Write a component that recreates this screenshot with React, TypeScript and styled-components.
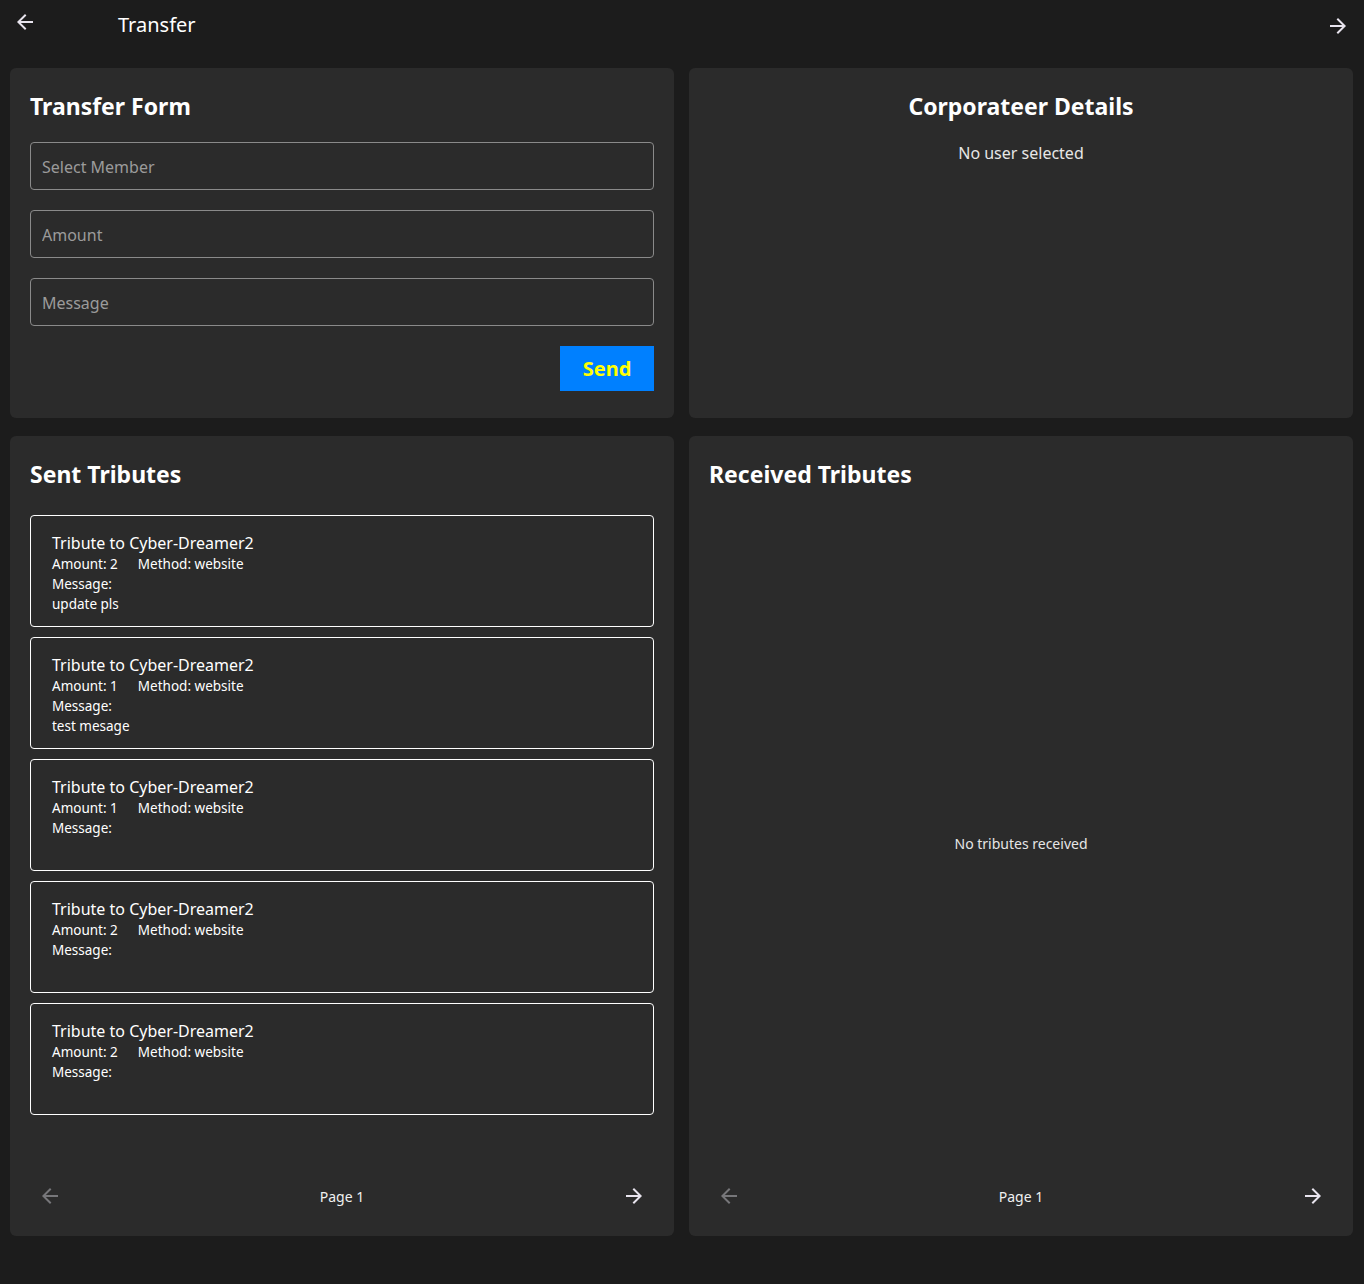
import React from 'react';
import styled, { createGlobalStyle } from 'styled-components';
import { MdArrowBack, MdArrowForward } from 'react-icons/md';

const GlobalStyle = createGlobalStyle`
  html, body {
    margin: 0;
    padding: 0;
    background: #1c1c1c;
    color: #ffffff;
    font-family: 'Noto Sans', 'Open Sans', sans-serif;
  }
  * {
    box-sizing: border-box;
  }
`;

const Page = styled.div`
  min-height: 1284px;
  background: #1c1c1c;
`;

const TopBar = styled.header`
  display: flex;
  align-items: center;
  height: 48px;
  padding: 0 14px 0 13px;
`;

const IconButton = styled.button<{ muted?: boolean }>`
  display: flex;
  align-items: center;
  justify-content: center;
  background: none;
  border: none;
  padding: 0;
  cursor: pointer;
  color: ${({ muted }) => (muted ? '#77777a' : '#e8e4ee')};
`;

const TopTitle = styled.h1`
  margin: 0 0 0 81px;
  font-size: 20px;
  font-weight: 400;
  flex: 1;
`;

const Grid = styled.main`
  display: grid;
  grid-template-columns: 664px 664px;
  grid-template-rows: 350px 800px;
  column-gap: 15px;
  row-gap: 18px;
  padding: 20px 10px 0 10px;
`;

const Panel = styled.section`
  display: flex;
  flex-direction: column;
  background: #2b2b2b;
  border-radius: 6px;
  padding: 22px 20px 20px 20px;
`;

const PanelTitle = styled.h2<{ center?: boolean }>`
  margin: 0 0 20px 0;
  font-size: 23px;
  font-weight: 700;
  line-height: 32px;
  text-align: ${({ center }) => (center ? 'center' : 'left')};
`;

const Form = styled.div`
  display: flex;
  flex-direction: column;
  gap: 20px;
`;

const Input = styled.input`
  height: 48px;
  width: 100%;
  background: transparent;
  border: 1px solid #8a8a8a;
  border-radius: 4px;
  padding: 2px 11px 0 11px;
  font-family: inherit;
  font-size: 16px;
  color: #ffffff;
  &::placeholder {
    color: #9b9b9b;
  }
`;

const ButtonRow = styled.div`
  display: flex;
  justify-content: flex-end;
`;

const SendButton = styled.button`
  width: 94px;
  height: 45px;
  background: #0080ff;
  color: #ffff00;
  border: none;
  font-family: inherit;
  font-size: 20px;
  font-weight: 700;
  cursor: pointer;
`;

const CenterText = styled.p<{ small?: boolean }>`
  margin: 0;
  text-align: center;
  font-size: ${({ small }) => (small ? '14px' : '16px')};
  color: #e6e6e6;
`;

const List = styled.div`
  display: flex;
  flex-direction: column;
  gap: 10px;
  flex: 1;
  margin-top: 5px;
`;

const EmptyList = styled.div`
  flex: 1;
  display: flex;
  align-items: center;
  justify-content: center;
`;

const Card = styled.div`
  height: 112px;
  border: 1px solid #ffffff;
  border-radius: 4px;
  padding: 16px 21px 14px 21px;
`;

const CardTitle = styled.div`
  font-size: 16px;
  line-height: 22px;
`;

const CardLine = styled.div`
  display: flex;
  gap: 20px;
  font-size: 13.5px;
  line-height: 20px;
`;

const Pager = styled.div`
  display: flex;
  align-items: center;
  justify-content: space-between;
  height: 40px;
  padding: 0 8px;
`;

const PageLabel = styled.span`
  font-size: 14px;
  color: #f0f0f0;
`;

type Tribute = { to: string; amount: number; method: string; message: string };

const sent: Tribute[] = [
  { to: 'Cyber-Dreamer2', amount: 2, method: 'website', message: 'update pls' },
  { to: 'Cyber-Dreamer2', amount: 1, method: 'website', message: 'test mesage' },
  { to: 'Cyber-Dreamer2', amount: 1, method: 'website', message: '' },
  { to: 'Cyber-Dreamer2', amount: 2, method: 'website', message: '' },
  { to: 'Cyber-Dreamer2', amount: 2, method: 'website', message: '' },
];

const Pagination = () => (
  <Pager>
    <IconButton muted aria-label="previous">
      <MdArrowBack size={24} />
    </IconButton>
    <PageLabel>Page 1</PageLabel>
    <IconButton aria-label="next">
      <MdArrowForward size={24} />
    </IconButton>
  </Pager>
);

export default function App() {
  return (
    <Page>
      <GlobalStyle />
      <TopBar>
        <IconButton aria-label="back" style={{ marginTop: -4 }}>
          <MdArrowBack size={24} />
        </IconButton>
        <TopTitle>Transfer</TopTitle>
        <IconButton aria-label="forward" style={{ marginTop: 4 }}>
          <MdArrowForward size={24} />
        </IconButton>
      </TopBar>
      <Grid>
        <Panel>
          <PanelTitle>Transfer Form</PanelTitle>
          <Form>
            <Input placeholder="Select Member" />
            <Input placeholder="Amount" />
            <Input placeholder="Message" />
            <ButtonRow>
              <SendButton>Send</SendButton>
            </ButtonRow>
          </Form>
        </Panel>
        <Panel>
          <PanelTitle center>Corporateer Details</PanelTitle>
          <CenterText>No user selected</CenterText>
        </Panel>
        <Panel>
          <PanelTitle>Sent Tributes</PanelTitle>
          <List>
            {sent.map((t, i) => (
              <Card key={i}>
                <CardTitle>Tribute to {t.to}</CardTitle>
                <CardLine>
                  <span>Amount: {t.amount}</span>
                  <span>Method: {t.method}</span>
                </CardLine>
                <CardLine>Message:</CardLine>
                {t.message && <CardLine>{t.message}</CardLine>}
              </Card>
            ))}
          </List>
          <Pagination />
        </Panel>
        <Panel>
          <PanelTitle>Received Tributes</PanelTitle>
          <EmptyList>
            <CenterText small>No tributes received</CenterText>
          </EmptyList>
          <Pagination />
        </Panel>
      </Grid>
    </Page>
  );
}
